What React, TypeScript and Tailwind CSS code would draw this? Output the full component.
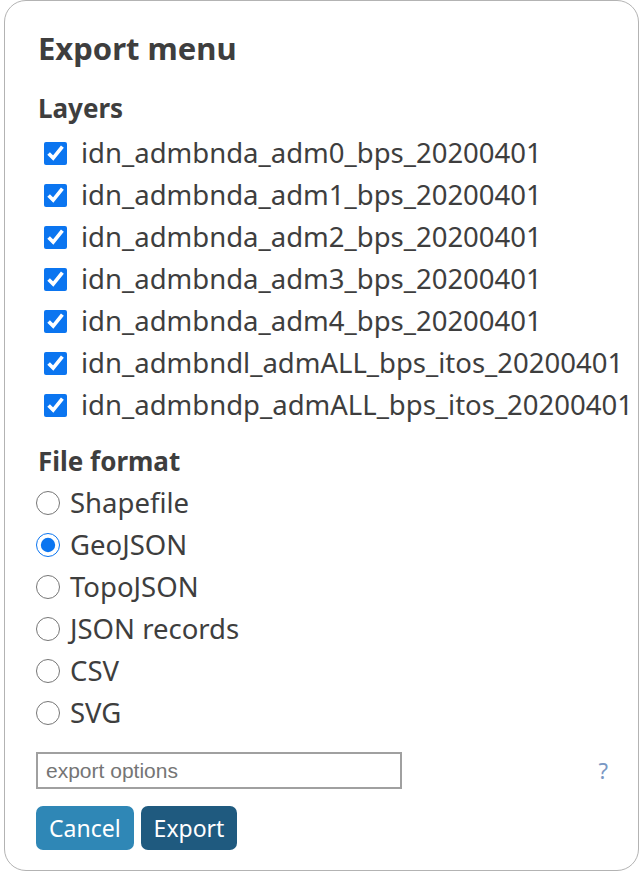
import React, { useState } from "react";

const layers = [
  "idn_admbnda_adm0_bps_20200401",
  "idn_admbnda_adm1_bps_20200401",
  "idn_admbnda_adm2_bps_20200401",
  "idn_admbnda_adm3_bps_20200401",
  "idn_admbnda_adm4_bps_20200401",
  "idn_admbndl_admALL_bps_itos_20200401",
  "idn_admbndp_admALL_bps_itos_20200401",
];

const formats = ["Shapefile", "GeoJSON", "TopoJSON", "JSON records", "CSV", "SVG"];

const App = () => {
  const [checked, setChecked] = useState<number[]>([0, 1, 2, 3, 4, 5, 6]);
  const [format, setFormat] = useState("GeoJSON");

  const toggle = (index: number) => {
    setChecked((prev) =>
      prev.includes(index) ? prev.filter((i) => i != index) : [...prev, index]
    );
  };

  return (
    <div className="min-h-screen bg-white pl-[4px] pr-[3px] font-['Noto_Sans',sans-serif] text-[#3e3e3e]">
      <div className="h-[871px] rounded-[22px] border border-[#b3b3b3] bg-white pl-[33px] pt-[29px]">
        <h2 className="text-[31px] font-bold leading-[36px]">Export menu</h2>

        <h3 className="mt-[26px] text-[26px] font-bold leading-[32px]">Layers</h3>
        <div className="mt-[8px]">
          {layers.map((name, index) => (
            <label key={name} className="flex h-[42px] cursor-pointer items-center">
              <input
                type="checkbox"
                checked={checked.includes(index)}
                onChange={() => toggle(index)}
                className="ml-[6px] h-[23px] w-[23px] accent-[#0b75f0]"
              />
              <span className="ml-[14px] text-[27.5px] leading-[42px]">{name}</span>
            </label>
          ))}
        </div>

        <h3 className="mt-[19px] text-[26px] font-bold leading-[32px]">File format</h3>
        <div className="mt-[5px]">
          {formats.map((f) => (
            <label key={f} className="flex h-[42px] cursor-pointer items-center">
              <input
                type="radio"
                name="format"
                checked={format == f}
                onChange={() => setFormat(f)}
                className="-ml-[2px] h-[24px] w-[24px] accent-[#0b75f0]"
              />
              <span className="ml-[10px] text-[27.5px] leading-[42px]">{f}</span>
            </label>
          ))}
        </div>

        <div className="mt-[18px] flex items-center pr-[30px]">
          <input
            type="text"
            placeholder="export options"
            className="-ml-[2px] h-[37px] w-[366px] border-2 border-[#a0a0a0] px-[8px] font-['Liberation_Sans',sans-serif] text-[21px] placeholder:text-[#757575] outline-none"
          />
          <span className="ml-auto text-[22px] text-[#7a98c4]">?</span>
        </div>

        <div className="mt-[17px] flex gap-[7px] -ml-[2px]">
          <button className="h-[44px] rounded-[7px] bg-[#2f87b6] px-[13px] text-[23px] text-white">
            Cancel
          </button>
          <button className="h-[44px] rounded-[7px] bg-[#1f5a7f] px-[13px] text-[23px] text-white">
            Export
          </button>
        </div>
      </div>
    </div>
  );
};

export default App;
